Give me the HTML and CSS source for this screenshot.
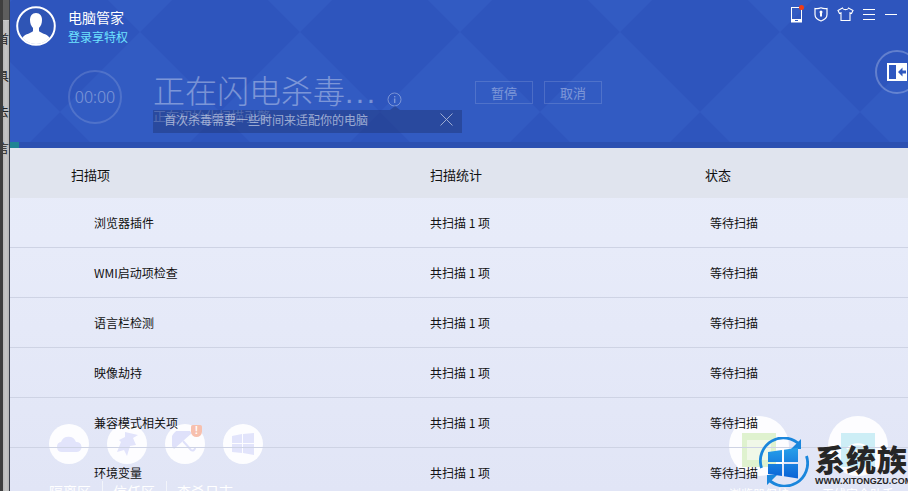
FILE: index.html
```html
<!DOCTYPE html>
<html lang="zh-CN">
<head>
<meta charset="utf-8">
<title>电脑管家</title>
<link rel="stylesheet" href="styles.css">
</head>
<body>
<div class="page">
  <aside class="strip">
    <span class="strip-ch c1">首</span>
    <span class="strip-ch c2">具</span>
    <span class="strip-ch c3">去</span>
    <span class="strip-ch c4">言</span>
  </aside>
  <main class="app">
    <header class="hero">
      <svg class="hero-bg" width="898" height="148" viewBox="0 0 898 148" aria-hidden="true">
        <defs>
          <pattern id="lattice" width="160" height="160" patternUnits="userSpaceOnUse" x="-30" y="-48">
            <polygon points="80,0 160,80 80,160 0,80" fill="#24459f" opacity=".12"/>
            <polygon points="0,0 80,0 0,80" fill="#4a74d6" opacity=".1"/>
            <polygon points="80,0 160,0 160,80" fill="#4a74d6" opacity=".1"/>
            <polygon points="0,80 80,160 0,160" fill="#4a74d6" opacity=".1"/>
            <polygon points="160,80 160,160 80,160" fill="#4a74d6" opacity=".1"/>
          </pattern>
        </defs>
        <rect width="898" height="148" fill="url(#lattice)"/>
      </svg>
      <div class="topbar">
        <div class="user">
          <svg class="avatar" width="40" height="40" viewBox="0 0 40 40" aria-hidden="true">
            <circle cx="20" cy="20" r="18.8" fill="#2f55b5" stroke="#fff" stroke-width="2"/>
            <clipPath id="av"><circle cx="20" cy="20" r="18"/></clipPath>
            <path clip-path="url(#av)" d="M20 7c-4 0-6 3-6 7 0 3 1 6 3 8v3c-1 2-8 3-10 6-1 2-1 4-1 9h28c0-5 0-7-1-9-2-3-9-4-10-6v-3c2-2 3-5 3-8 0-4-2-7-6-7z" fill="#fff"/>
          </svg>
          <div class="user-text">
            <div class="user-name">电脑管家</div>
            <div class="user-link">登录享特权</div>
          </div>
        </div>
        <div class="tools">
          <span class="tool phone">
            <svg width="12" height="16" viewBox="0 0 12 16" aria-hidden="true"><rect x=".5" y=".5" width="10" height="14.5" fill="none" stroke="#fff"/><rect x=".5" y="12" width="10" height="3" fill="#fff"/><rect x="4" y="13" width="3" height="1" fill="#3058c0"/></svg>
            <i class="dot"></i>
          </span>
          <svg class="tool" width="14" height="15" viewBox="0 0 14 15" aria-hidden="true"><path d="M1 1.500C4 2 5.500 1.500 7 .8c1.500.7 3 1.200 6 .7v6c0 3.500-3 5.500-6 6.500-3-1-6-3-6-6.500z" fill="none" stroke="#fff" stroke-width="1.200"/><circle cx="7" cy="5" r="1.500" fill="#fff"/><rect x="6" y="5.500" width="2" height="4" fill="#fff"/></svg>
          <svg class="tool" width="17" height="14" viewBox="0 0 17 14" aria-hidden="true"><path d="M5.500 1 1 3.500l1.500 3 1.500-.7V13.500h9V5.800l1.500.7 1.500-3L11.500 1c-.5 2.200-5.500 2.200-6 0z" fill="none" stroke="#fff" stroke-width="1.100"/></svg>
          <span class="tool burger"><i></i><i></i><i></i></span>
          <span class="tool minimize"></span>
        </div>
      </div>
      <div class="scan">
        <div class="timer">00:00</div>
        <div class="scan-title">
          <h1>正在闪电杀毒<span class="dots">...</span></h1>
          <svg class="info" width="15" height="15" viewBox="0 0 15 15" aria-hidden="true"><circle cx="7.500" cy="7.500" r="6.500" fill="none" stroke="#fff" stroke-width="1"/><rect x="7" y="6.500" width="1.400" height="4.500" fill="#fff"/><rect x="7" y="4" width="1.400" height="1.400" fill="#fff"/></svg>
          <button class="btn">暂停</button>
          <button class="btn">取消</button>
        </div>
      </div>
      <div class="tip">
        <span class="tip-under">正在初始化扫描引擎</span>
        <span class="tip-text">首次杀毒需要一些时间来适配你的电脑</span>
        <svg class="tip-close" width="13" height="13" viewBox="0 0 13 13" aria-hidden="true"><path d="M.5.5l12 12M12.500.5l-12 12" stroke="#fff" stroke-width=".9"/></svg>
      </div>
      <div class="side-btn">
        <svg width="21" height="18" viewBox="0 0 21 18" aria-hidden="true"><rect width="20" height="18" fill="#fff"/><rect x="2" y="2" width="7" height="14" fill="#3058c0"/><path d="M11 9l4.500-4.500V7.500H19v3h-3.500v3z" fill="#3058c0"/></svg>
      </div>
      <div class="hero-band"><i class="band-teal"></i></div>
    </header>
    <div class="dock-left">
      <div class="dock-icons">
        <span class="bubble"><svg width="26" height="16" viewBox="0 0 26 16" aria-hidden="true"><path d="M6 16a5 5 0 0 1-1-9.900A8 8 0 0 1 20 6a5 5 0 0 1 1 10z" fill="#e2e4fb"/></svg></span>
        <span class="bubble"><svg width="22" height="24" viewBox="0 0 22 24" aria-hidden="true"><path d="M9 0l13 3-5 3 3 7-6 1-3 10-3-6-7 2 4-10L3 8l6-3z" fill="#e2e4fb"/></svg></span>
        <span class="bubble"><svg width="26" height="26" viewBox="0 0 26 26" aria-hidden="true"><path d="M2 18A12 12 0 0 1 20 2z" fill="#dfe1fa"/><path d="M11 10l8 9a2.500 2.500 0 0 0 4-2" fill="none" stroke="#dfe1fa" stroke-width="2"/></svg><i class="warn">!</i></span>
        <span class="bubble"><svg width="22" height="22" viewBox="0 0 22 22" aria-hidden="true"><path d="M0 3l10-2v9H0zM11 1l11-1v10H11zM0 11h10v9L0 19zM11 11h11v11l-11-2z" fill="#e2e4fb"/></svg></span>
      </div>
      <div class="dock-links"><span>隔离区</span><span>信任区</span><span>查杀日志</span></div>
    </div>
    <div class="dock-right">
      <div class="dock-item"><span class="bubble big"><i class="tile green"><i class="tile-inner"></i></i></span><span class="dock-label">浏览器保护</span></div>
      <div class="dock-item"><span class="bubble big"><i class="tile cyan"><svg width="34" height="34" viewBox="0 0 34 34" aria-hidden="true"><path d="M6 16a15 15 0 0 1 22 0M10 21a10 10 0 0 1 14 0" fill="none" stroke="#fff" stroke-width="2"/></svg></i></span><span class="dock-label">无线安全助手</span></div>
    </div>
    <section class="table">
      <div class="row head"><span class="c-a">扫描项</span><span class="c-b">扫描统计</span><span class="c-c">状态</span></div>
      <div class="row"><span class="c-a">浏览器插件</span><span class="c-b">共扫描 1 项</span><span class="c-c">等待扫描</span></div>
      <div class="row"><span class="c-a">WMI启动项检查</span><span class="c-b">共扫描 1 项</span><span class="c-c">等待扫描</span></div>
      <div class="row"><span class="c-a">语言栏检测</span><span class="c-b">共扫描 1 项</span><span class="c-c">等待扫描</span></div>
      <div class="row"><span class="c-a">映像劫持</span><span class="c-b">共扫描 1 项</span><span class="c-c">等待扫描</span></div>
      <div class="row"><span class="c-a">兼容模式相关项</span><span class="c-b">共扫描 1 项</span><span class="c-c">等待扫描</span></div>
      <div class="row"><span class="c-a">环境变量</span><span class="c-b">共扫描 1 项</span><span class="c-c">等待扫描</span></div>
    </section>
    <div class="watermark">
      <svg width="50" height="50" viewBox="0 0 50 50" aria-hidden="true">
        <defs><linearGradient id="win" x1="0" y1="0" x2="0" y2="1"><stop offset="0" stop-color="#27a0ea"/><stop offset="1" stop-color="#0a62d6"/></linearGradient></defs>
        <path d="M2.500 31A23 23 0 0 1 41 8" fill="none" stroke="#1a86dc" stroke-width="2.800"/>
        <path d="M47.500 19A23 23 0 0 1 9 42" fill="none" stroke="#1a86dc" stroke-width="2.800"/>
        <path d="M42 2v10H32zM8 48V38h10z" fill="#1a86dc"/>
        <path d="M9 15l14-2v12H9zM25 12.700l14-2V25H25zM9 27h14v12L9 37zM25 27h14v14.500l-14-2.200z" fill="url(#win)"/>
      </svg>
      <div class="wm-text">
        <div class="wm-cn">系统族</div>
        <div class="wm-en">WWW.XITONGZU.COM</div>
      </div>
    </div>
  </main>
</div>
</body>
</html>
```
FILE: styles.css
```css
* { box-sizing: border-box; }
html, body { margin: 0; padding: 0; }
body {
  width: 908px;
  height: 491px;
  overflow: hidden;
  font-family: "Noto Sans CJK SC", "Liberation Sans", sans-serif;
  background: #e6ebf8;
}
.page { display: flex; width: 908px; height: 491px; overflow: hidden; }
.strip {
  position: relative;
  width: 10px;
  flex: none;
  background:
    linear-gradient(90deg, #3f3f3f 0 3px, transparent 3px 9px, #3a3f4a 9px 10px),
    linear-gradient(180deg, #5e5e5e 0 20px, #c8c8c8 20px 21px, transparent 21px),
    linear-gradient(90deg, #a9a9a9 0, #c6c6c6 60%, #b0b0b0 100%);
}
.strip-ch {
  position: absolute;
  left: 3px;
  width: 6px;
  overflow: hidden;
  font-size: 12px;
  line-height: 14px;
  color: #222;
  text-indent: -6px;
  white-space: nowrap;
}
.c1 { top: 32px; }
.c2 { top: 69px; }
.c3 { top: 105px; }
.c4 { top: 141px; }
.app {
  position: relative;
  flex: 1;
  min-width: 0;
  height: 491px;
  overflow: hidden;
  background: linear-gradient(180deg, #e9eefa 0, #e7ebf9 50%, #e1e5f6 100%);
}

.hero {
  position: relative;
  height: 148px;
  background: #3058c1;
}
.hero-bg { position: absolute; left: 0; top: 0; }
.topbar {
  position: relative;
  display: flex;
  justify-content: space-between;
  padding: 6px 11px 0 6px;
}
.user { display: flex; align-items: flex-start; }
.avatar { display: block; flex: none; }
.user-text { margin-left: 12px; padding-top: 2px; }
.user-name { font-size: 14px; line-height: 19px; color: #fff; }
.user-link { font-size: 12px; line-height: 19px; color: #6fe3ff; }
.tools { display: flex; align-items: flex-start; padding-top: 1px; }
.tool { display: block; margin-right: 9px; }
.phone { position: relative; width: 12px; height: 16px; margin-right: 11px; }
.phone svg { display: block; }
.dot {
  position: absolute;
  left: 8px;
  top: -2px;
  width: 5px;
  height: 5px;
  border-radius: 50%;
  background: #f23c14;
}
.burger {
  display: flex;
  flex-direction: column;
  justify-content: space-between;
  width: 12px;
  height: 11px;
  margin-top: 2px;
  margin-right: 10px;
}
.burger i { display: block; height: 1px; background: #fff; }
.minimize { width: 12px; height: 1px; margin: 7px 0 0; background: #fff; }

.scan {
  position: relative;
  display: flex;
  align-items: flex-start;
  padding: 24px 0 0 58px;
  opacity: .36;
}
.timer {
  width: 54px;
  height: 54px;
  border: 2px solid rgba(255, 255, 255, .4);
  border-radius: 50%;
  flex: none;
  font-size: 16px;
  line-height: 50px;
  text-align: center;
  color: #fff;
  font-family: "Noto Sans", sans-serif;
  font-weight: 300;
}
.scan-title { display: flex; align-items: flex-start; margin-left: 31px; }
.scan-title h1 {
  margin: -3px 0 0;
  font-size: 32px;
  line-height: 44px;
  font-weight: 300;
  color: #fff;
  white-space: nowrap;
  width: 234px;
}
.dots { font-size: 30px; letter-spacing: 2.500px; font-family: "Liberation Sans", sans-serif; }
.info { margin: 22px 0 0 0; flex: none; }
.btn {
  width: 58px;
  height: 23px;
  margin: 11px 0 0 11px;
  padding: 0;
  background: transparent;
  border: 1px solid rgba(255, 255, 255, .4);
  color: #fff;
  font: 13px/21px "Noto Sans CJK SC", sans-serif;
}
.info + .btn { margin-left: 73px; }

.tip {
  position: absolute;
  left: 143px;
  top: 110px;
  width: 309px;
  height: 23px;
  background: rgba(34, 58, 130, .55);
  display: flex;
  align-items: center;
  justify-content: space-between;
  padding: 0 9px 5px 11px;
}
.tip::before {
  content: "";
  position: absolute;
  left: 237px;
  top: -4px;
  border: 5px solid transparent;
  border-top: 0;
  border-bottom: 4px solid rgba(34, 58, 130, .55);
}
.tip-under {
  position: absolute;
  left: 0;
  top: -1px;
  font-size: 13px;
  line-height: 14px;
  color: rgba(255, 255, 255, .2);
}
.tip-text { position: relative; font-size: 12px; color: rgba(255, 255, 255, .55); }
.tip-close { opacity: .6; }
.side-btn {
  position: absolute;
  left: 865px;
  top: 50px;
  width: 44px;
  height: 44px;
  border: 2px solid rgba(255, 255, 255, .25);
  border-radius: 50%;
  padding: 11px 0 0 10px;
}
.side-btn svg { display: block; }
.hero-band {
  position: absolute;
  left: 0;
  right: 0;
  bottom: 0;
  height: 6px;
  background: #2c50b1;
}
.band-teal { display: block; width: 9px; height: 6px; background: #1f8494; }

.table { position: relative; color: #111; }
.row {
  display: grid;
  grid-template-columns: 420px 280px 1fr;
  align-items: center;
  height: 50px;
  font-size: 12px;
  border-bottom: 1px solid #ced3e4;
}
.row .c-a { padding-left: 84px; }
.row.head {
  font-size: 13px;
  background: #e0e4ee;
  border-bottom: 0;
  padding-top: 2px;
  grid-template-columns: 420px 275px 1fr;
}
.row.head .c-a { padding-left: 61px; }

.dock-left {
  position: absolute;
  left: 39px;
  top: 424px;
}
.dock-icons { display: flex; gap: 18px; }
.bubble {
  position: relative;
  display: flex;
  align-items: center;
  justify-content: center;
  width: 40px;
  height: 40px;
  border-radius: 50%;
  background: rgba(255, 255, 255, .92);
}
.warn {
  position: absolute;
  right: 3px;
  top: 1px;
  width: 11px;
  height: 12px;
  border-radius: 2px 2px 6px 6px;
  background: #f7c0ae;
  color: #fff;
  font: bold 10px/12px "Liberation Sans", sans-serif;
  text-align: center;
}
.dock-links {
  display: flex;
  margin-top: 17px;
  font-size: 14px;
  line-height: 20px;
  color: #fff;
}
.dock-links span { padding-right: 11px; margin-right: 10px; border-right: 1px solid rgba(255,255,255,.6); }
.dock-links span:last-child { border: 0; }
.dock-right {
  position: absolute;
  left: 719px;
  top: 416px;
  display: flex;
  gap: 39px;
}
.dock-item { display: flex; flex-direction: column; align-items: center; width: 60px; }
.big { width: 60px; height: 60px; }
.tile { display: block; width: 34px; height: 34px; margin-top: 8px; }
.tile svg { display: block; }
.green { background: #dff2cf; padding: 7px 5px 0; }
.tile-inner { display: block; width: 24px; height: 20px; background: #f0f8e8; }
.cyan { background: #cdeef6; }
.dock-label { margin-top: 10px; font-size: 12px; line-height: 16px; color: #fff; white-space: nowrap; }
.watermark {
  position: absolute;
  left: 749px;
  top: 437px;
  display: flex;
  align-items: flex-start;
}
.wm-text { margin-left: 6px; padding-top: 2px; }
.wm-cn {
  font-size: 30px;
  line-height: 38px;
  font-weight: 900;
  letter-spacing: 1px;
  color: #262626;
  white-space: nowrap;
}
.wm-en {
  font: bold 9px/9px "Liberation Sans", sans-serif;
  color: #262626;
  white-space: nowrap;
}
```
